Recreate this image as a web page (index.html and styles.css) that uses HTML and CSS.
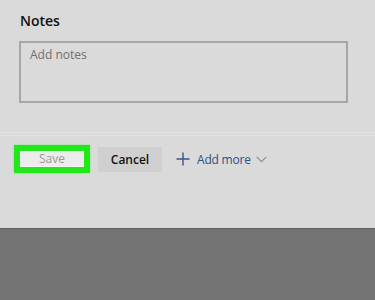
FILE: index.html
```html
<!DOCTYPE html>
<html lang="en">
<head>
    <meta charset="UTF-8">
    <meta name="viewport" content="width=device-width, initial-scale=1.0">
    <title>Notes</title>
    <link rel="stylesheet" href="styles.css">
</head>
<body>
    <div class="page">
        <section class="notes">
            <h2>Notes</h2>
            <div class="notes-box">Add notes</div>
        </section>
        <div class="divider"></div>
        <div class="actions">
            <div class="highlight">
                <button class="btn btn-save">Save</button>
            </div>
            <button class="btn btn-cancel">Cancel</button>
            <button class="add-more">
                <svg class="plus" width="14" height="14" viewBox="0 0 14 14">
                    <path d="M7 0.5V13.5M0.5 7H13.5" stroke="#3d5684" stroke-width="1.4" fill="none"/>
                </svg>
                <span>Add more</span>
                <svg class="chev" width="11" height="7" viewBox="0 0 11 7">
                    <path d="M0.7 0.8L5.5 5.6L10.3 0.8" stroke="#8a8f99" stroke-width="1.2" fill="none"/>
                </svg>
            </button>
        </div>
        <div class="footer"></div>
    </div>
</body>
</html>
```

FILE: styles.css
```css
body {
    margin: 0;
    background-color: #dadada;
    font-family: 'Open Sans', Arial, sans-serif;
    color: #1a1a1a;
}
.page {
    display: flex;
    flex-direction: column;
    height: 300px;
}
.notes {
    padding: 11px 27px 0 19px;
}
.notes h2 {
    margin: 0 0 0 1px;
    font-size: 14px;
    font-weight: 600;
    line-height: 20px;
    color: #111;
}
.notes-box {
    margin-top: 10px;
    height: 50px;
    border: 2px solid #a6a6a6;
    padding: 4px 9px;
    font-size: 12px;
    line-height: 16px;
    color: #6f6f6f;
}
.divider {
    margin-top: 29px;
    height: 2px;
    border-top: 1px solid #e5e5e5;
    border-bottom: 1px solid #e3e3e3;
}
.actions {
    display: flex;
    align-items: center;
    padding: 9px 0 0 14px;
}
.highlight {
    border: 6px solid #22e81b;
    box-shadow: 0 0 2px #6cf066;
}
.btn {
    font-family: 'Open Sans', Arial, sans-serif;
    font-size: 12px;
    border: none;
    padding: 0;
    cursor: pointer;
}
.btn-save {
    display: block;
    width: 64px;
    height: 16px;
    background-color: #ececec;
    border: 1px solid #f4f4f4;
    color: #9a9a9a;
    line-height: 14px;
}
.btn-cancel {
    margin-left: 8px;
    width: 64px;
    height: 25px;
    background-color: #d0d0d0;
    color: #111;
    font-weight: 600;
}
.add-more {
    display: flex;
    align-items: center;
    margin-left: 14px;
    background: none;
    border: none;
    padding: 0;
    font-family: 'Open Sans', Arial, sans-serif;
    font-size: 12px;
    letter-spacing: -0.2px;
    color: #2f4f86;
    cursor: pointer;
}
.add-more .plus {
    margin-right: 7px;
}
.add-more .chev {
    margin-left: 5px;
}
.footer {
    margin-top: auto;
    height: 71px;
    background-color: #737373;
    border-top: 1px solid #5f5f5f;
}
```
